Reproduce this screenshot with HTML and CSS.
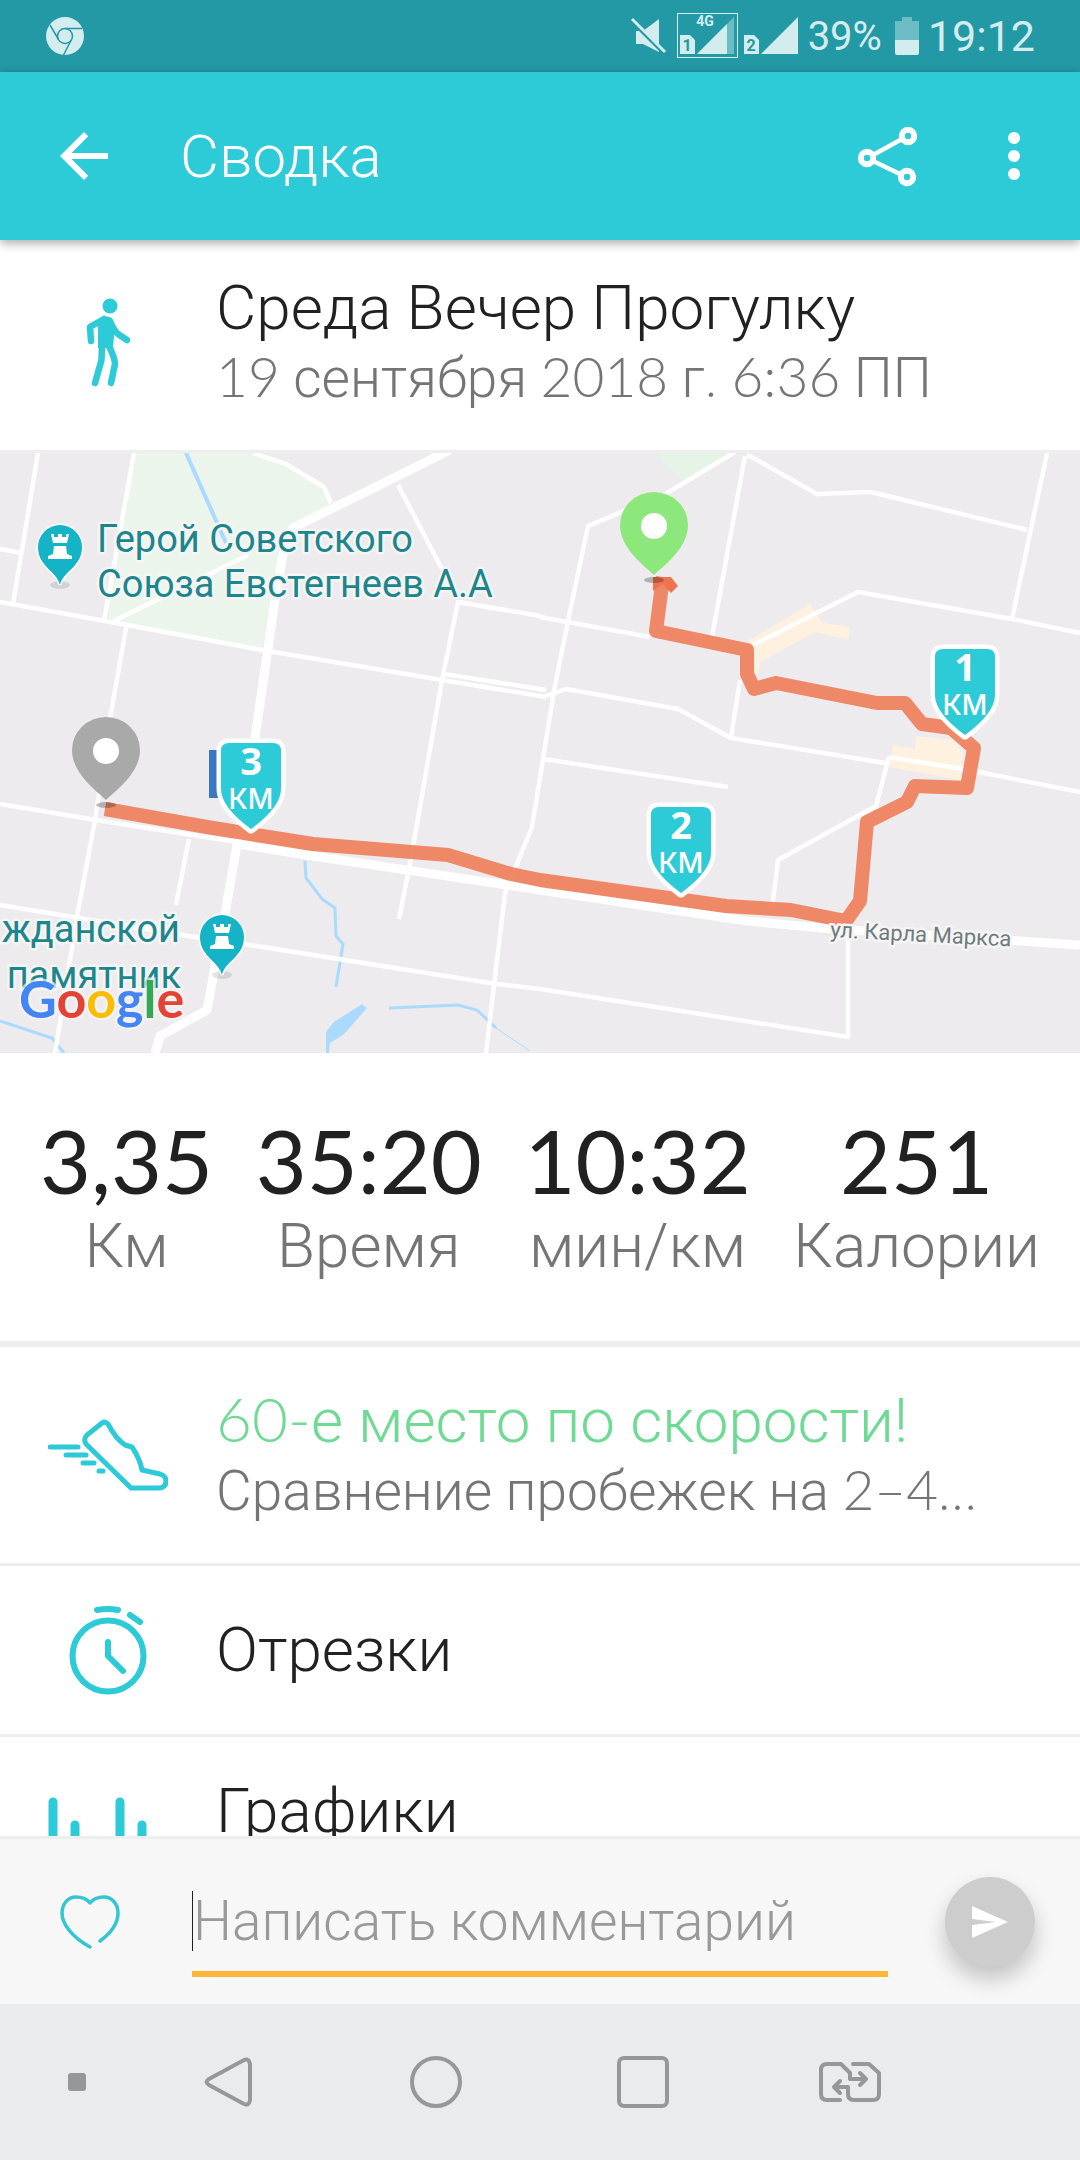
FILE: index.html
```html
<!DOCTYPE html>
<html lang="ru">
<head>
    <meta charset="UTF-8">
    <meta name="viewport" content="width=device-width, initial-scale=1.0">
    <title>Сводка</title>
    <link rel="stylesheet" href="styles.css">
</head>
<body>
    <div class="status-bar">
        <svg class="status-chrome" width="38" height="38" viewBox="0 0 38 38">
            <circle cx="19" cy="19" r="19" fill="#d3edee"/>
            <g fill="none" stroke="#2499a6" stroke-width="1.5">
                <circle cx="19" cy="19" r="7.5"/>
                <path d="M19 11.5H36M12.5 22.500L4 8M25.500 22.500L17.500 38"/>
            </g>
        </svg>
        <svg class="status-icons" width="170" height="46" viewBox="0 0 170 46">
            <!-- muted speaker -->
            <path d="M5 18H12L28 6V39L12 31H5Z" fill="#d3edee"/>
            <path d="M2 9L35 42" stroke="#2499a6" stroke-width="4"/>
            <path d="M1 6L34 39" stroke="#d3edee" stroke-width="3"/>
            <!-- first SIM -->
            <rect x="46.500" y="0.500" width="60" height="44" fill="none" stroke="#d3edee"/>
            <path d="M49 22H59L64 27V41H49Z" fill="#d3edee"/>
            <path d="M66 41L103 4V41Z" fill="#6bbcc4"/>
            <path d="M66 41L96 11V41Z" fill="#d3edee"/>
            <text class="sim-net" x="74" y="13">4G</text>
            <text class="sim-num" x="56" y="38">1</text>
            <!-- second SIM -->
            <path d="M113 22H123L128 27V41H113Z" fill="#d3edee"/>
            <path d="M130 41L167 4V41Z" fill="#d3edee"/>
            <text class="sim-num" x="120" y="38">2</text>
        </svg>
        <span class="battery-text">39%</span>
        <svg width="24" height="38" viewBox="0 0 24 38">
            <path d="M7 0H17V4H24V24H0V4H7Z" fill="#6bbcc4"/>
            <path d="M0 23H24V36Q24 38 22 38H2Q0 38 0 36Z" fill="#d3edee"/>
        </svg>
        <span class="clock">19:12</span>
    </div>

    <header class="app-bar">
        <button class="icon-btn" aria-label="Назад">
            <svg width="72" height="72" viewBox="0 0 24 24"><path fill="#fff" d="M20 11H7.830l5.590-5.590L12 4l-8 8 8 8 1.410-1.410L7.830 13H20v-2z"/></svg>
        </button>
        <h1 class="app-title">Сводка</h1>
        <button class="icon-btn" aria-label="Поделиться">
            <svg width="72" height="72" viewBox="0 0 72 72" fill="none" stroke="#fff">
                <path d="M21 35L50 19M21 41L50 55" stroke-width="4.500"/>
                <g stroke-width="6" fill="#2dcad7">
                    <circle cx="56" cy="16" r="6.200"/>
                    <circle cx="15" cy="38" r="6.200"/>
                    <circle cx="55" cy="57" r="6.200"/>
                </g>
            </svg>
        </button>
        <button class="icon-btn icon-btn-more" aria-label="Ещё">
            <svg width="72" height="72" viewBox="0 0 24 24" fill="#fff">
                <circle cx="12" cy="6" r="2"/><circle cx="12" cy="12" r="2"/><circle cx="12" cy="18" r="2"/>
            </svg>
        </button>
    </header>

    <main class="content">
        <section class="row trip">
            <div class="row-icon">
                <svg width="45" height="89" viewBox="0 0 45 89">
                    <circle cx="24" cy="8" r="7.500" fill="#2dcad7"/>
                    <path d="M12 23Q19 17 24 19L29 27L27 50L12 50L12 34Z" fill="#2dcad7"/>
                    <g fill="none" stroke="#2dcad7" stroke-width="6.500" stroke-linecap="round" stroke-linejoin="round">
                        <path d="M18 21L4 29L5 43"/>
                        <path d="M24 23Q28 33 32 36L41 42"/>
                        <path d="M16 46L15.500 62L9 85"/>
                        <path d="M22 46Q29 60 29 66L25 85"/>
                    </g>
                </svg>
            </div>
            <div class="row-text">
                <h2 class="row-title">Среда Вечер Прогулку</h2>
                <p class="row-sub"><span class="num">19</span> сентября <span class="num">2018</span> г. <span class="num">6:36</span> ПП</p>
            </div>
        </section>

        <svg class="map" viewBox="0 0 1080 600">
            <defs>
                <g id="pin">
                    <ellipse cx="0" cy="5" rx="10" ry="3" fill="#000" opacity="0.25"/>
                    <path d="M0 0C-8 -8 -34 -26 -34 -50A34 33 0 0 1 34 -50C34 -26 8 -8 0 0Z"/>
                    <circle cx="0" cy="-49" r="13" fill="#fff"/>
                </g>
                <path id="shield" d="M-30 -78Q-30 -86 -22 -86H22Q30 -86 30 -78V-40Q30 -22 0 0Q-30 -22 -30 -40Z"/>
                <g id="poi">
                    <ellipse cx="0" cy="38" rx="10" ry="4" fill="#000" opacity="0.1"/>
                    <path d="M0 38C-3 24 -22 20 -22 0A22 22 0 0 1 22 0C22 20 3 24 0 38Z" fill="#15b3c6" stroke="#fff" stroke-width="3" paint-order="stroke"/>
                    <path d="M-9 -13H-6V-10H-2V-13H2V-10H6V-13H9L7 -4H-7ZM-6 -1H6L7 7L12 9V12H-12V9L-7 7Z" fill="#fff"/>
                </g>
            </defs>

            <rect width="1080" height="600" fill="#edebed"/>

            <!-- parks and built-up areas -->
            <path d="M134 0H253L286 11L324 34L331 51L290 72L280 105L262 197L127 172L107 168Z" fill="#ecf5ec"/>
            <path d="M657 0H733L683 28L671 18Z" fill="#e6f3e7"/>
            <path d="M748 188L810 151L822 170L850 174L848 186L815 179L760 209L758 223L747 211Z" fill="#fff1e0"/>
            <path d="M893 292L915 296L916 283L953 287L963 300L960 327L889 314Z" fill="#fff1e0"/>

            <!-- water -->
            <g fill="none" stroke="#aadaff" stroke-width="3">
                <path d="M186 0L226 90" stroke-width="4"/>
                <path d="M305 408L306 425L322 446L335 455L336 483L343 491L336 534"/>
                <path d="M389 555L458 552L477 557L496 575"/>
                <path d="M0 568L52 585L64 600"/>
                <path d="M496 575L530 598" stroke-width="1"/>
            </g>
            <path d="M362 551L367 555L344 581L330 590L329 600H326V579L334 569Z" fill="#aadaff"/>

            <!-- streets -->
            <g fill="none" stroke="#fff" stroke-width="4.500" stroke-linejoin="round">
                <path d="M38 0L13 151M134 0L104 168M253 0L286 11L324 34L331 50"/>
                <path d="M248 102L114 168M0 96L21 100"/>
                <path d="M0 149L127 172L262 197L442 227L546 244M444 221L546 237"/>
                <path d="M127 170L110 265L95 367L77 464L55 600"/>
                <path d="M0 351L96 367L237 389"/>
                <path d="M398 32L442 116M540 163L458 149L442 227L412 400L399 466"/>
                <path d="M189 386L176 452M0 452L200 485L250 492L490 530L540 536L848 584V480"/>
                <path d="M735 -1L667 40L588 73L568 168L554 238L532 374L513 421L505 440L486 600"/>
                <path d="M745 3L712 184M747 2L757 7L817 41L871 39L1027 77M1047 0L1012 166"/>
                <path d="M540 164L650 184M753 192L858 139L1012 166L1080 180"/>
                <path d="M546 243L566 236L678 256L731 285L885 310M889 304L963 316L1080 339M740 227L731 285"/>
                <path d="M543 306L728 334M889 304L876 353L778 407L772 456"/>
            </g>
            <g fill="none" stroke="#fff" stroke-width="9" stroke-linejoin="round">
                <path d="M450 -3L293 75L283 102L276 140L255 285L237 392L225 461L207 557L160 583L155 600"/>
                <path d="M237 391L313 403L540 437L747 468L833 476L1080 492"/>
            </g>

            <rect x="209" y="297" width="9" height="48" fill="#3b78c3"/>

            <!-- place labels -->
            <text class="poi-label" x="97" y="99">Герой Советского</text>
            <text class="poi-label" x="97" y="144">Союза Евстегнеев А.А</text>
            <text class="poi-label poi-label-end" x="180" y="489">жданской</text>
            <text class="poi-label poi-label-end" x="181" y="535">памятник</text>
            <use href="#poi" x="60" y="94"/>
            <use href="#poi" x="222" y="484"/>

            <!-- walked route -->
            <path class="route" d="M663 124L656 178L747 197V221L754 236L776 230L877 250H905L922 271L951 275L974 295L967 335L915 333L907 349L867 369L860 448L846 468L791 457L726 453L540 427L511 421L448 402L313 391L207 374L105 356"/>
            <path d="M653 124H671L678 133L671 140L663 131L653 138Z" fill="#ee7350"/>
            <text class="street-label" transform="translate(830 484) rotate(3)">ул. Карла Маркса</text>

            <use href="#pin" x="654" y="122" fill="#8de87c"/>
            <use href="#pin" x="106" y="347" fill="#a9a9a9"/>

            <!-- kilometre marks -->
            <g class="km" transform="translate(965 282)">
                <use href="#shield"/>
                <text class="km-num" y="-54">1</text>
                <text class="km-unit" y="-20">КМ</text>
            </g>
            <g class="km" transform="translate(681 440)">
                <use href="#shield"/>
                <text class="km-num" y="-54">2</text>
                <text class="km-unit" y="-20">КМ</text>
            </g>
            <g class="km" transform="translate(251 376)">
                <use href="#shield"/>
                <text class="km-num" y="-54">3</text>
                <text class="km-unit" y="-20">КМ</text>
            </g>

            <text class="map-logo" x="19" y="565"><tspan fill="#4385f5">G</tspan><tspan fill="#e34335">o</tspan><tspan fill="#fbbc05">o</tspan><tspan fill="#4385f5">g</tspan><tspan fill="#34a853">l</tspan><tspan fill="#e34335">e</tspan></text>
        </svg>

        <section class="stats">
            <div class="stat"><span class="stat-value">3,35</span><span class="stat-label">Км</span></div>
            <div class="stat"><span class="stat-value">35:20</span><span class="stat-label">Время</span></div>
            <div class="stat"><span class="stat-value">10:32</span><span class="stat-label">мин/км</span></div>
            <div class="stat"><span class="stat-value">251</span><span class="stat-label">Калории</span></div>
        </section>

        <section class="row">
            <div class="row-icon">
                <svg width="120" height="72" viewBox="0 0 120 72" fill="none" stroke="#2dcad7" stroke-width="5" stroke-linejoin="round">
                    <path d="M54 4L39 16Q35 20 38 25L83 69H110Q118 69 118 62Q118 57 112 55L94 51Q92 40 84 28L77 26Q68 20 60 5Q57 2 54 4Z"/>
                    <path d="M2 28H30M18 36H38M35 44H46M51 52H55" stroke-linecap="round"/>
                </svg>
            </div>
            <div class="row-text">
                <h2 class="row-title row-title-green"><span class="num">60-</span>е место по скорости!</h2>
                <p class="row-sub">Сравнение пробежек на <span class="num">2–4</span>...</p>
            </div>
        </section>

        <section class="row">
            <div class="row-icon">
                <svg width="78" height="92" viewBox="0 0 78 92" fill="none" stroke="#2dcad7" stroke-width="6" stroke-linecap="round" stroke-linejoin="round">
                    <circle cx="39" cy="52" r="35.500"/>
                    <path d="M28 6Q39 4 49 6M61 11L71 18M39 38V52L54 67"/>
                </svg>
            </div>
            <h2 class="row-title">Отрезки</h2>
        </section>

        <section class="row row-charts">
            <div class="row-icon">
                <svg width="120" height="100" viewBox="0 0 120 100" stroke="#2dcad7" stroke-width="9" stroke-linecap="round">
                    <path d="M5 27V96M27 50V96M49 74V96M72 27V96M94 50V96"/>
                </svg>
            </div>
            <h2 class="row-title">Графики</h2>
        </section>
    </main>

    <form class="comment-bar">
        <button class="like-btn" type="button" aria-label="Нравится">
            <svg width="60" height="54" viewBox="0 0 60 54" fill="none" stroke="#35c6d3" stroke-width="3.500" stroke-linecap="round" stroke-linejoin="round">
                <path d="M30 52C12 42 2 29 2 18C2 9 8 2 16 2C22 2 27 4 30 8C33 4 38 2 44 2C52 2 58 9 58 18C58 28 51 38 40 46"/>
            </svg>
        </button>
        <div class="comment-field">
            <input class="comment-input" type="text" placeholder="Написать комментарий" aria-label="Написать комментарий">
        </div>
        <button class="send-btn" type="button" aria-label="Отправить">
            <svg width="38" height="34" viewBox="0 0 38 34" fill="#fff"><path d="M1 1L37 17L1 33V20L25 17L1 14Z"/></svg>
        </button>
    </form>

    <nav class="nav-bar">
        <button class="nav-btn nav-btn-dot" aria-label="Скрыть панель">
            <svg width="18" height="18"><rect width="18" height="18" rx="3" fill="#96979a"/></svg>
        </button>
        <button class="nav-btn" aria-label="Назад">
            <svg width="52" height="54" viewBox="0 0 52 54"><path d="M41 5Q46 3 47 9V45Q46 51 41 49L6 30Q1 27 6 24Z"/></svg>
        </button>
        <button class="nav-btn" aria-label="Домой">
            <svg width="52" height="52" viewBox="0 0 52 52"><circle cx="26" cy="26" r="24"/></svg>
        </button>
        <button class="nav-btn" aria-label="Недавние">
            <svg width="52" height="52" viewBox="0 0 52 52"><rect x="2" y="2" width="48" height="48" rx="5"/></svg>
        </button>
        <button class="nav-btn" aria-label="Сменить SIM">
            <svg width="64" height="42" viewBox="0 0 64 42"><path d="M22 39H9Q3 39 3 33V9Q3 3 9 3H23L32 12V18H47M42 12L48 18L42 24M35 3H51L61 12V33Q61 39 55 39H36Q30 39 30 33V26H16M22 20L16 26L22 32" stroke-linecap="round" stroke-linejoin="round"/></svg>
        </button>
    </nav>
</body>
</html>
```

FILE: styles.css
```css
* {
    box-sizing: border-box;
}

body {
    margin: 0;
    height: 100vh;
    display: flex;
    flex-direction: column;
    background-color: #fff;
    color: #212121;
    font-family: Roboto, "Liberation Sans", sans-serif;
    font-weight: 300;
}

button {
    padding: 0;
    border: 0;
    background: none;
    display: flex;
    align-items: center;
    justify-content: center;
}

h1, h2, p {
    margin: 0;
    font-weight: 300;
}

svg {
    display: block;
}

/* Status bar */
.status-bar {
    flex: none;
    height: 72px;
    padding: 0 45px 0 46px;
    display: flex;
    align-items: center;
    background-color: #2499a6;
    color: #d3edee;
}

.status-chrome {
    margin-right: auto;
}

.sim-net {
    fill: #d3edee;
    font-size: 14px;
    font-weight: 700;
    text-anchor: middle;
}

.sim-num {
    fill: #2499a6;
    font-size: 16px;
    font-weight: 700;
    text-anchor: middle;
}

.battery-text {
    margin: 0 13px 0 7px;
    font-size: 40px;
    font-weight: 400;
}

.clock {
    margin-left: 9px;
    font-size: 43px;
    font-weight: 400;
}

/* App bar */
.app-bar {
    flex: none;
    height: 168px;
    padding: 0 30px 0 48px;
    display: flex;
    align-items: center;
    background-color: #2dcad7;
    box-shadow: 0 3px 10px rgba(0, 0, 0, 0.35);
    z-index: 1;
}

.app-title {
    flex: 1;
    padding-left: 60px;
    color: #fff;
    font-size: 60px;
}

.icon-btn-more {
    margin-left: 54px;
}

/* Content */
.content {
    flex: 1;
    min-height: 0;
    overflow: hidden;
}

.row {
    display: flex;
    align-items: center;
    padding: 38px 0;
    border-bottom: 3px solid #eee;
}

.trip {
    padding-top: 32px;
}

.row-charts {
    align-items: flex-start;
}

.row-icon {
    flex: none;
    width: 216px;
    display: flex;
    justify-content: center;
}

.row-title {
    font-size: 62px;
    line-height: 72px;
}

.row-title-green {
    color: #6fda94;
}

.row-sub {
    color: #757575;
    font-size: 55px;
    line-height: 68px;
}

/* zero line height keeps the second font from stretching the line */
.num {
    font-family: Lato, sans-serif;
    font-weight: 300;
    line-height: 0;
}

/* Map */
.map {
    width: 100%;
    height: auto;
}

.poi-label {
    fill: #1d858c;
    stroke: #f5f5f5;
    stroke-width: 5px;
    stroke-linejoin: round;
    paint-order: stroke;
    font-size: 38px;
    font-weight: 400;
}

.poi-label-end {
    text-anchor: end;
}

.street-label {
    fill: #6f7b7d;
    stroke: #f5f5f5;
    stroke-width: 5px;
    stroke-linejoin: round;
    paint-order: stroke;
    font-size: 22px;
    font-weight: 400;
}

.route {
    fill: none;
    stroke: #ee7f5b;
    stroke-width: 14px;
    stroke-linejoin: round;
    opacity: 0.92;
}

.km {
    fill: #2dcad7;
    stroke: #fff;
    stroke-width: 9px;
    stroke-linejoin: round;
    paint-order: stroke;
    text-anchor: middle;
}

.km-num,
.km-unit {
    fill: #fff;
    stroke: none;
}

.km-num {
    font-family: "Open Sans", sans-serif;
    font-size: 38px;
    font-weight: 700;
}

.km-unit {
    font-family: Inter, sans-serif;
    font-size: 28px;
    font-weight: 500;
}

.map-logo {
    stroke: rgba(245, 245, 245, 0.7);
    stroke-width: 5px;
    paint-order: stroke;
    font-family: Lato, sans-serif;
    font-size: 52px;
    font-weight: 700;
}

/* Totals */
.stats {
    display: flex;
    justify-content: space-between;
    padding: 55px 40px 61px;
    border-bottom: 6px solid #eee;
}

.stat {
    display: flex;
    flex-direction: column;
    align-items: center;
}

.stat-value {
    font-family: Lato, sans-serif;
    font-size: 88px;
    font-weight: 400;
    line-height: 104px;
}

.stat-label {
    color: #757575;
    font-size: 62px;
    line-height: 68px;
}

/* Comment bar */
.comment-bar {
    flex: none;
    display: flex;
    align-items: center;
    height: 168px;
    padding: 0 45px 0 60px;
    border-top: 3px solid #eee;
    background-color: #f7f7f7;
}

.comment-field {
    flex: 1;
    margin: 0 57px 0 72px;
    padding: 24px 0 20px;
    border-bottom: 6px solid #ffb639;
}

.comment-input {
    display: block;
    width: 100%;
    height: 60px;
    padding: 0;
    border: 0;
    border-left: 1px solid #212121;
    outline: 0;
    background: none;
    color: #212121;
    font-family: inherit;
    font-size: 55px;
    font-weight: 300;
}

.comment-input::placeholder {
    color: #999;
    opacity: 1;
}

.send-btn {
    width: 90px;
    height: 90px;
    border-radius: 50%;
    background-color: #cdcdcd;
    box-shadow: 0 12px 22px rgba(0, 0, 0, 0.22);
}

/* System navigation */
.nav-bar {
    flex: none;
    display: flex;
    height: 156px;
    padding-left: 29px;
    background-color: #e9ebee;
}

.nav-btn {
    width: 207px;
    fill: none;
    stroke: #96979a;
    stroke-width: 4px;
}

.nav-btn-dot {
    width: 96px;
    stroke: none;
}
```
